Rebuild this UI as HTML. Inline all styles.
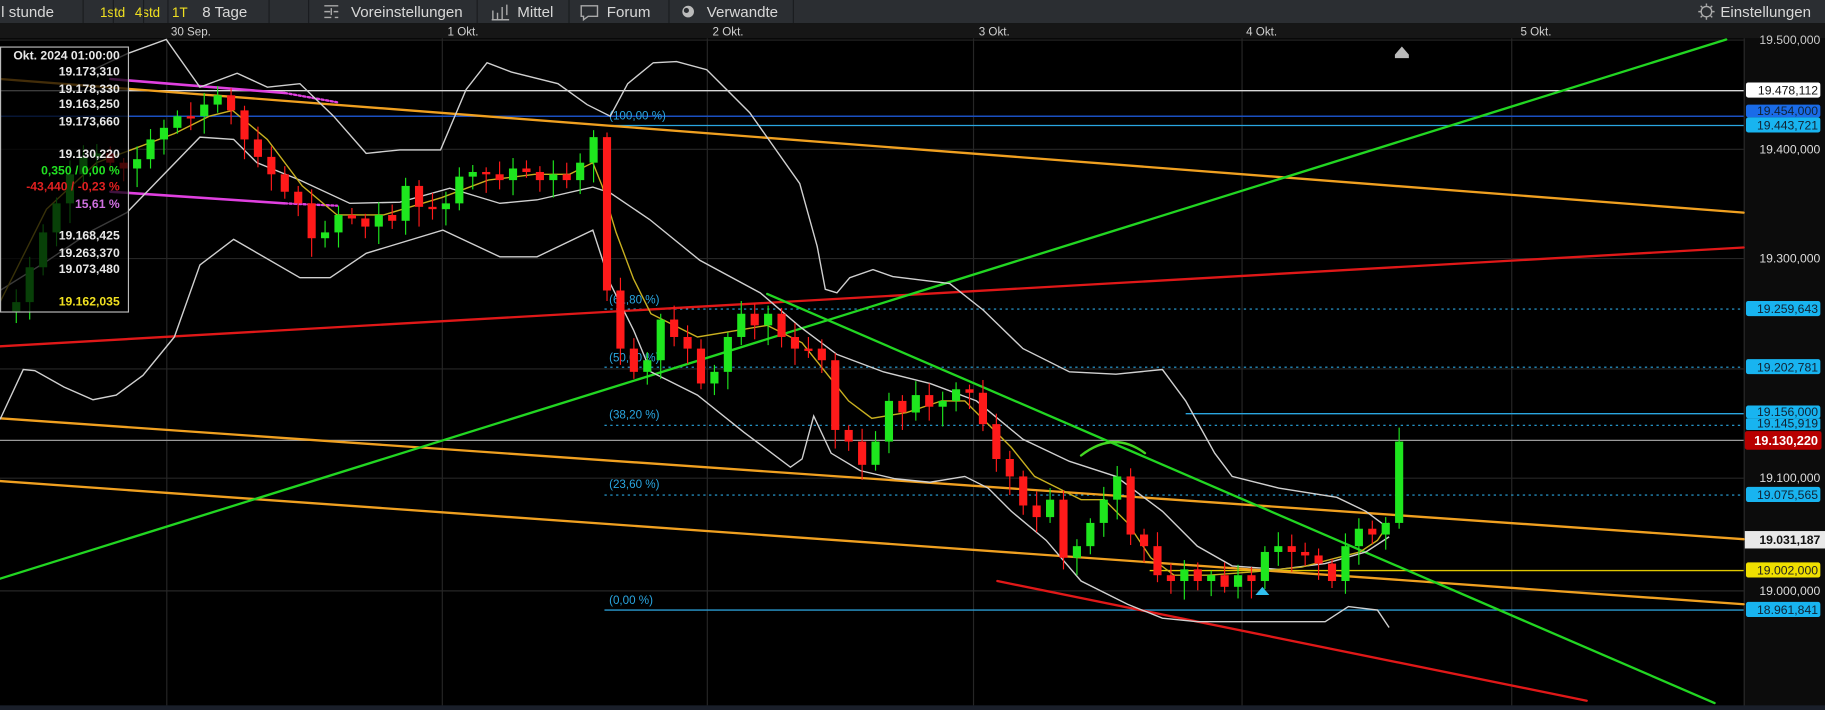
<!DOCTYPE html>
<html><head><meta charset="utf-8"><style>
html,body{margin:0;padding:0;background:#000;width:1825px;height:710px;overflow:hidden}
svg{display:block}
text{font-family:"Liberation Sans",Arial,sans-serif}
</style></head><body>
<svg id="s" width="1825" height="710" viewBox="0 0 1570 611" preserveAspectRatio="none" xmlns="http://www.w3.org/2000/svg">
<rect width="1570" height="611" fill="#000"/>
<!-- toolbar -->
<rect x="0" y="0" width="1570" height="20" fill="#2b2e32"/>
<g fill="#d8d8d8" font-size="13">
<text x="1" y="14.5">l stunde</text>
<text x="86" y="14.5" fill="#f0e020" font-size="11.5">1std</text>
<text x="116" y="14.5" fill="#f0e020" font-size="11.5">4std</text>
<text x="148" y="14.5" fill="#f0e020" font-size="11.5">1T</text>
<text x="174" y="14.5">8 Tage</text>
<text x="302" y="14.5">Voreinstellungen</text>
<text x="445" y="14.5">Mittel</text>
<text x="522" y="14.5">Forum</text>
<text x="608" y="14.5">Verwandte</text>
<text x="1480" y="14.5">Einstellungen</text>
</g>
<g stroke="#1a1c1f" stroke-width="1">
<line x1="71.5" y1="0" x2="71.5" y2="20"/><line x1="97.5" y1="0" x2="97.5" y2="20"/><line x1="123.5" y1="0" x2="123.5" y2="20"/><line x1="144.5" y1="0" x2="144.5" y2="20"/><line x1="231.5" y1="0" x2="231.5" y2="20"/><line x1="265.5" y1="0" x2="265.5" y2="20"/><line x1="410.5" y1="0" x2="410.5" y2="20"/><line x1="489.5" y1="0" x2="489.5" y2="20"/><line x1="575.5" y1="0" x2="575.5" y2="20"/><line x1="682.5" y1="0" x2="682.5" y2="20"/>
</g>
<g stroke="#aaa" stroke-width="1.2" fill="none">
<path d="M279 5h12M279 10h5M287 10h4M279 15h6M288 15h3M285 7v6"/>
<path d="M424 9v8M428 11v6M432 6v11M436 4v9M423 17h15"/>
<path d="M500 5h14v9h-8l-4 3v-3h-2z"/>
<circle cx="1468" cy="10" r="4.5"/>
<path d="M1468 3v2M1468 15v2M1461 10h2M1473 10h2M1463 5l1.5 1.5M1473 15l-1.5-1.5M1463 15l1.5-1.5M1473 5l-1.5 1.5"/>
</g>
<circle cx="592" cy="10" r="5" fill="#bbb"/><circle cx="590.5" cy="9" r="2.2" fill="#2b2e32"/>
<!-- date row -->
<rect x="0" y="20" width="1570" height="13" fill="#161616"/>
<g fill="#d0d0d0" font-size="10">
<text x="147" y="30.5">30 Sep.</text><text x="385" y="30.5">1 Okt.</text><text x="613" y="30.5">2 Okt.</text><text x="842" y="30.5">3 Okt.</text><text x="1072" y="30.5">4 Okt.</text><text x="1308" y="30.5">5 Okt.</text>
</g>
<rect x="1500" y="33" width="70" height="578" fill="#0c0c0c"/>
<line x1="1500.5" y1="33" x2="1500.5" y2="611" stroke="#2a2a2a"/>
<g stroke="#262626" stroke-width="1">
<line x1="143.5" y1="33" x2="143.5" y2="607"/><line x1="380.5" y1="33" x2="380.5" y2="607"/><line x1="608.5" y1="33" x2="608.5" y2="607"/><line x1="837.5" y1="33" x2="837.5" y2="607"/><line x1="1068.5" y1="33" x2="1068.5" y2="607"/><line x1="1300.5" y1="33" x2="1300.5" y2="607"/>
<line x1="0" y1="34.5" x2="1500" y2="34.5"/><line x1="0" y1="128.5" x2="1500" y2="128.5"/><line x1="0" y1="222.5" x2="1500" y2="222.5"/><line x1="0" y1="317.5" x2="1500" y2="317.5"/><line x1="0" y1="411.5" x2="1500" y2="411.5"/><line x1="0" y1="508.5" x2="1500" y2="508.5"/>
</g>
<rect x="0" y="607" width="1570" height="4" fill="#1a1f2a"/>
<line x1="0" y1="78" x2="1500" y2="78" stroke="#d8d8d8" stroke-width="1.2"/>
<line x1="0" y1="100" x2="1500" y2="100" stroke="#1a4fc0" stroke-width="1.3"/>
<line x1="520" y1="108" x2="1500" y2="108" stroke="#2aa6e0" stroke-width="1.1"/>
<line x1="1020" y1="356" x2="1500" y2="356" stroke="#2aa6e0" stroke-width="1.1"/>
<line x1="0" y1="379" x2="1500" y2="379" stroke="#9a9a9a" stroke-width="1.1"/>
<line x1="989" y1="491" x2="1500" y2="491" stroke="#e0c800" stroke-width="1.1"/>
<line x1="520" y1="525" x2="1500" y2="525" stroke="#2a9ad0" stroke-width="1.1"/>
<g stroke="#2aa6e0" stroke-width="1" stroke-dasharray="2,3">
<line x1="520" y1="266" x2="1500" y2="266"/><line x1="520" y1="316" x2="1500" y2="316"/><line x1="520" y1="366" x2="1500" y2="366"/><line x1="520" y1="426" x2="1500" y2="426"/>
</g>
<g fill="#2aa6e0" font-size="10">
<text x="524" y="103">(100,00 %)</text><text x="524" y="261">(61,80 %)</text><text x="524" y="311">(50,00 %)</text><text x="524" y="360">(38,20 %)</text><text x="524" y="420">(23,60 %)</text><text x="524" y="520">(0,00 %)</text>
</g>
<g fill="none" stroke-linecap="round">
<line x1="0" y1="68" x2="1500" y2="183" stroke="#f0a020" stroke-width="2"/>
<line x1="0" y1="360" x2="1500" y2="464" stroke="#f0a020" stroke-width="2"/>
<line x1="0" y1="414" x2="1500" y2="520" stroke="#f0a020" stroke-width="2"/>
<line x1="0" y1="298" x2="1500" y2="213" stroke="#e01818" stroke-width="2"/>
<line x1="858" y1="500" x2="1365" y2="603" stroke="#e01818" stroke-width="2"/>
<line x1="0" y1="498" x2="1485" y2="34" stroke="#22d622" stroke-width="2"/>
<line x1="660" y1="253" x2="1475" y2="605" stroke="#22d622" stroke-width="2"/>
<path d="M930 392 Q958 370 985 390" stroke="#44d622" stroke-width="2"/>
<line x1="95" y1="68" x2="245" y2="80" stroke="#e040e0" stroke-width="2.2"/>
<line x1="245" y1="80" x2="290" y2="88" stroke="#e040e0" stroke-width="2" stroke-dasharray="2,2"/>
<line x1="95" y1="165" x2="245" y2="175" stroke="#e040e0" stroke-width="2.2"/>
<line x1="245" y1="175" x2="290" y2="177" stroke="#e040e0" stroke-width="2" stroke-dasharray="2,2"/>
</g>
<g fill="none" stroke="#d0d0d0" stroke-width="1.2">
<polyline points="80,60 110,46 143,34 172,75 204,63 230,75 258,72 287,100 315,132 344,129 379,129 401,77 419,54 440,62 480,72 505,90 525,100 540,72 562,54 582,53 608,60 645,97 688,158 703,212 710,249 720,252 731,239 751,232 768,238 817,244 846,267 880,300 920,320 960,322 1000,318 1020,345 1045,390 1060,410 1100,420 1150,428 1175,440 1195,455"/>
<polyline points="0,250 40,225 80,198 109,183 172,118 201,120 221,140 258,155 301,175 344,174 387,162 430,175 462,172 510,161 525,166 559,189 602,224 654,252 688,281 720,305 760,320 800,330 840,345 880,378 920,397 960,410 1000,440 1030,470 1060,487 1100,490 1140,485 1175,475 1195,462"/>
<polyline points="0,361 20,318 30,319 55,333 80,344 100,340 123,323 150,290 172,228 201,206 258,239 284,239 315,218 381,198 430,221 462,221 510,198 525,244 545,284 560,320 600,340 640,372 680,402 690,395 700,358 715,390 740,405 770,412 800,415 830,410 850,420 870,440 900,465 930,500 970,520 1000,532 1030,535 1100,535 1140,535 1160,522 1185,525 1195,540"/>
</g>
<polyline fill="none" stroke="#c8b020" stroke-width="1.2" points="0,260 40,180 83,140 110,130 150,115 180,100 200,95 230,120 260,160 290,185 330,185 380,170 420,155 460,150 490,150 510,140 518,160 530,200 545,240 560,270 580,280 600,290 630,285 660,280 690,295 710,320 730,345 750,360 780,355 810,345 830,345 850,365 870,385 890,410 910,420 930,430 950,430 970,450 990,480 1010,495 1040,495 1080,492 1120,488 1150,480 1170,475 1185,465 1195,450"/>
<g id="candles"></g>
<path d="M1080 512 L1086 505 L1092 512 Z" fill="#30c0f0"/>
<path d="M1200 47 L1206 40 L1212 47 Z M1200 47h12v3h-12z" fill="#bbb"/>
<rect x="0.5" y="40.5" width="110" height="228" fill="#000" fill-opacity="0.72" stroke="#bbb" stroke-width="1"/>
<g font-size="10.5" font-weight="bold" text-anchor="end" fill="#e8e8e8">
<text x="103" y="51">Okt. 2024 01:00:00</text>
<text x="103" y="65">19.173,310</text><text x="103" y="80">19.178,330</text><text x="103" y="93">19.163,250</text><text x="103" y="108">19.173,660</text>
<text x="103" y="136">19.130,220</text>
<text x="103" y="150" fill="#22e022">0,350 / 0,00 %</text>
<text x="103" y="164" fill="#e02020">-43,440 / -0,23 %</text>
<text x="103" y="179" fill="#d070e0">15,61 %</text>
<text x="103" y="206">19.168,425</text><text x="103" y="221">19.263,370</text><text x="103" y="235">19.073,480</text>
<text x="103" y="263" fill="#f0e020">19.162,035</text>
</g>
<g font-size="10.5" text-anchor="end">
<text x="1566" y="38" fill="#ccc">19.500,000</text>
<rect x="1502" y="71" width="64" height="13" rx="2" fill="#fff"/><text x="1564" y="81.5" fill="#111">19.478,112</text>
<rect x="1502" y="90" width="64" height="11" rx="2" fill="#1a6be8"/><text x="1564" y="99" fill="#123">19.454,000</text>
<rect x="1502" y="101" width="64" height="13" rx="2" fill="#18b4f0"/><text x="1564" y="111.5" fill="#123">19.443,721</text>
<text x="1566" y="132" fill="#ddd">19.400,000</text>
<text x="1566" y="226" fill="#ddd">19.300,000</text>
<rect x="1502" y="259" width="64" height="13" rx="2" fill="#18b4f0"/><text x="1564" y="269.5" fill="#123">19.259,643</text>
<rect x="1502" y="309" width="64" height="13" rx="2" fill="#18b4f0"/><text x="1564" y="319.5" fill="#123">19.202,781</text>
<rect x="1502" y="349" width="64" height="11" rx="2" fill="#18b4f0"/><text x="1564" y="358" fill="#123">19.156,000</text>
<rect x="1502" y="360" width="64" height="10" rx="1" fill="#18b4f0"/><text x="1564" y="368" fill="#123">19.145,919</text>
<rect x="1501" y="371" width="66" height="16" rx="2" fill="#b80000"/><text x="1564" y="383" fill="#fff" font-weight="bold" font-size="11">19.130,220</text>
<text x="1566" y="415" fill="#ddd">19.100,000</text>
<rect x="1502" y="419" width="64" height="13" rx="2" fill="#18b4f0"/><text x="1564" y="429.5" fill="#123">19.075,565</text>
<rect x="1501" y="457" width="69" height="15" fill="#e8e8e8"/><text x="1566" y="468" fill="#111" font-weight="bold">19.031,187</text>
<rect x="1502" y="484" width="64" height="13" rx="2" fill="#f0e000"/><text x="1564" y="494.5" fill="#222">19.002,000</text>
<text x="1566" y="512" fill="#ddd">19.000,000</text>
<rect x="1502" y="518" width="64" height="13" rx="2" fill="#18b4f0"/><text x="1564" y="528.5" fill="#123">18.961,841</text>
</g>
</svg>
<script>
(function(){
var c=[268,260,230,200,175,150,135,132,140,145,137,120,110,100,100,90,82,95,120,135,150,165,175,205,200,185,188,195,185,190,160,178,180,175,152,148,150,155,145,148,155,150,155,140,118,250,300,320,310,275,290,300,330,320,290,270,280,270,290,300,300,310,370,380,400,380,345,355,340,350,345,335,338,365,395,410,435,445,430,480,470,450,430,410,460,470,495,500,490,500,495,505,495,500,475,470,475,478,485,500,470,455,460,450,380];
var g=document.getElementById('candles'),h='';
for(var i=1;i<c.length;i++){
 var x=14+(i-1)*11.55,o=c[i-1],cl=c[i];
 var up=cl<o, col=up?'#1ee61e':'#ff1a1a';
 var t=Math.min(o,cl),b=Math.max(o,cl);if(b-t<2)b=t+2;
 var hi=t-4-(i*7%9),lo=b+5+(i*5%13);
 h+='<line x1="'+x+'" y1="'+hi+'" x2="'+x+'" y2="'+lo+'" stroke="'+col+'" stroke-width="1"/>';
 h+='<rect x="'+(x-3.5)+'" y="'+t+'" width="7" height="'+(b-t)+'" fill="'+col+'"/>';
}
g.innerHTML=h;
})();
</script>
</body></html>
